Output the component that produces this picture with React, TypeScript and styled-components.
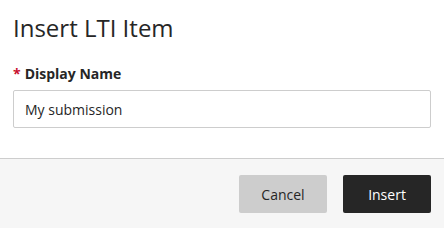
import { FC } from 'react';
import styled, { createGlobalStyle } from 'styled-components';

const GlobalStyle = createGlobalStyle`
  html, body {
    margin: 0;
    padding: 0;
    background: #ffffff;
    font-family: "Open Sans", "Noto Sans", sans-serif;
  }
`;

const Dialog = styled.div`
  width: 444px;
  height: 228px;
  display: flex;
  flex-direction: column;
  background: #ffffff;
  overflow: hidden;
`;

const Body = styled.div`
  display: flex;
  flex-direction: column;
  padding: 12px 13px 0 13px;
  height: 159px;
  box-sizing: border-box;
  border-bottom: 1px solid #cdcdcd;
`;

const Title = styled.h2`
  margin: 0;
  font-size: 24px;
  font-weight: 400;
  line-height: 32px;
  color: #262626;
`;

const Label = styled.label`
  margin-top: 20px;
  display: flex;
  gap: 4px;
  font-size: 14px;
  font-weight: 700;
  line-height: 20px;
  color: #262626;
`;

const Required = styled.span`
  color: #c8102e;
`;

const Input = styled.input`
  margin-top: 6px;
  height: 38px;
  width: 418px;
  box-sizing: border-box;
  padding: 0 11px;
  border: 1px solid #cdcdcd;
  border-radius: 2px;
  font-family: inherit;
  font-size: 14px;
  color: #262626;
  outline: none;
`;

const Footer = styled.div`
  flex: 1;
  display: flex;
  justify-content: flex-end;
  align-items: flex-start;
  gap: 16px;
  padding: 16px 13px 0 0;
  background: #f6f6f6;
`;

const Button = styled.button<{ $primary?: boolean }>`
  width: 88px;
  height: 38px;
  border: none;
  border-radius: 2px;
  font-family: inherit;
  font-size: 14px;
  cursor: pointer;
  background: ${({ $primary }) => ($primary ? '#262626' : '#cdcdcd')};
  color: ${({ $primary }) => ($primary ? '#ffffff' : '#262626')};
`;

const App: FC = () => (
  <>
    <GlobalStyle />
    <Dialog>
      <Body>
        <Title>Insert LTI Item</Title>
        <Label>
          <Required>*</Required>
          Display Name
        </Label>
        <Input defaultValue="My submission" />
      </Body>
      <Footer>
        <Button type="button">Cancel</Button>
        <Button type="button" $primary>
          Insert
        </Button>
      </Footer>
    </Dialog>
  </>
);

export default App;
